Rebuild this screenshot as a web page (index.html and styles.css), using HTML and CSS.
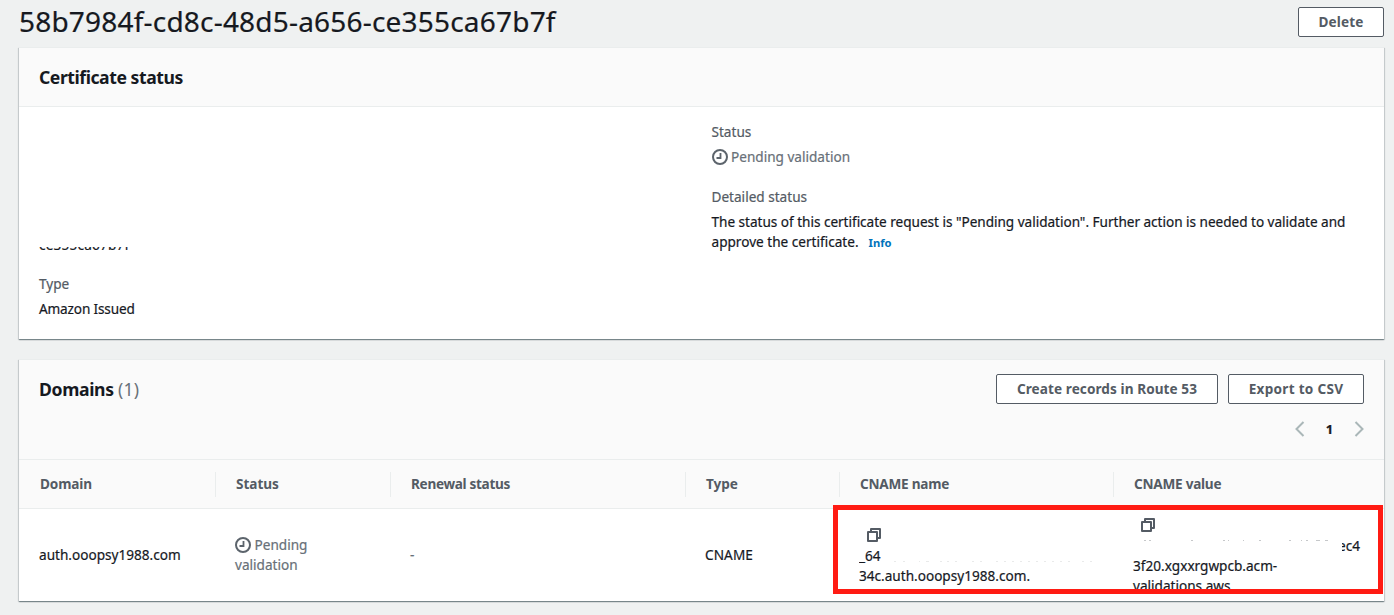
FILE: index.html
```
<!DOCTYPE html>
<html lang="en">
<head>
<meta charset="utf-8">
<title>Certificate status</title>
<link rel="stylesheet" href="styles.css">
</head>
<body>
<svg width="0" height="0" class="defs" aria-hidden="true">
  <symbol id="clock" viewBox="0 0 16 16">
    <circle cx="8" cy="8" r="7" fill="none" stroke="currentColor" stroke-width="2"/>
    <path d="M8.5 4v5H4.5" fill="none" stroke="currentColor" stroke-width="1.8"/>
  </symbol>
  <symbol id="copy" viewBox="0 0 14 14">
    <path d="M1 4h9v9H1zM4 4V1h9v9h-3" fill="none" stroke="currentColor" stroke-width="2" stroke-linejoin="round"/>
  </symbol>
</svg>
<header class="page-head">
  <h1 class="title">58b7984f-cd8c-48d5-a656-ce355ca67b7f</h1>
  <button class="btn delete">Delete</button>
</header>

<section class="card status-card">
  <div class="card-head"><h2 class="heading cert">Certificate status</h2></div>
  <div class="columns">
    <div class="column left">
      <div class="clipped-id"><span>ce355ca67b7f</span></div>
      <dl class="pair">
        <dt>Type</dt>
        <dd class="issued">Amazon Issued</dd>
      </dl>
    </div>
    <div class="column">
      <dl class="pair">
        <dt>Status</dt>
        <dd class="pending"><svg class="clock"><use href="#clock"/></svg>Pending validation</dd>
      </dl>
      <dl class="pair">
        <dt>Detailed status</dt>
        <dd><span class="detail">The status of this certificate request is "Pending validation". Further action is needed to validate and</span><br>approve the certificate.<a class="info">Info</a></dd>
      </dl>
    </div>
  </div>
</section>

<section class="card domains-card">
  <div class="toolbar">
    <h2 class="heading">Domains <span class="count">(1)</span></h2>
    <div class="tools">
      <div class="buttons">
        <button class="btn route">Create records in Route 53</button>
        <button class="btn csv">Export to CSV</button>
      </div>
      <div class="pager">
        <svg class="arrow" viewBox="0 0 10 16"><path d="M8.5 1L1.5 8l7 7"/></svg>
        <span class="page">1</span>
        <svg class="arrow" viewBox="0 0 10 16"><path d="M1.5 1l7 7-7 7"/></svg>
      </div>
    </div>
  </div>
  <div class="row head">
    <div class="th">Domain</div>
    <div class="th">Status</div>
    <div class="th renewal">Renewal status</div>
    <div class="th">Type</div>
    <div class="th cname">CNAME name</div>
    <div class="th cname">CNAME value</div>
  </div>
  <div class="row body">
    <div class="td">auth.ooopsy1988.com</div>
    <div class="td pending"><div><svg class="clock"><use href="#clock"/></svg>Pending<br>validation</div></div>
    <div class="td pending">-</div>
    <div class="td type">CNAME</div>
    <div class="td name">
      <div class="line icon"><svg class="copy"><use href="#copy"/></svg></div>
      <div class="line masked"><span class="prefix">_64</span><svg class="residue" width="215" height="20"><path d="M11 15.5h2m7 0h2m14 0h1m6 0h3m11 0h2m5 0h2m6 0h2m15 0h2m6 0h2m14 0h2m6 0h2m6 0h2m6 0h2m6 0h2m6 0h2m6 0h2m6 0h2m6 0h2m6 0h2m12 0h2m6 0h2"/></svg></div>
      <div class="line">34c.auth.ooopsy1988.com.</div>
    </div>
    <div class="td value">
      <div class="line icon"><svg class="copy"><use href="#copy"/></svg></div>
      <div class="line tail"><svg class="residue tops" width="209" height="20"><path d="M11 4.5h2m3 0h2m40 0h2m30 0h2m3 0h1m14 0h1m15 0h2m28 0h2m10 0h1m4 0h2m8 0h4m5 0h3"/></svg><span class="suffix"><span>ec4</span></span></div>
      <div class="line">3f20.xgxxrgwpcb.acm-</div>
      <div class="line">validations.aws</div>
    </div>
  </div>
  <div class="highlight"></div>
</section>
</body>
</html>
```
FILE: styles.css
```
* { box-sizing: border-box; }
body {
  margin: 0;
  height: 615px;
  overflow: hidden;
  padding: 0 10px 0 19px;
  background: #eff1f1;
  color: #16191f;
  font: 13.6px/20px "Noto Sans", sans-serif;
  -webkit-text-stroke: .2px currentColor;
}
h1, h2, dl, dd { margin: 0; }
.defs { position: absolute; }
.page-head { display: flex; justify-content: space-between; align-items: flex-start; height: 47px; }
.title { font-size: 28px; line-height: 36px; font-weight: 400; letter-spacing: .2px; padding-top: 3px; }
.btn {
  height: 30px;
  padding: 0;
  border: 1px solid #545b64;
  border-radius: 2px;
  background: #fff;
  color: #545b64;
  font: 700 13.6px/28px "Noto Sans", sans-serif;
  letter-spacing: .1px;
}
.btn, .head, .info, .heading { -webkit-text-stroke: 0; }
.delete { width: 86px; margin-top: 7px; }
.route { width: 222px; letter-spacing: .07px; }
.csv { width: 136px; letter-spacing: .27px; }

.card {
  position: relative;
  background: #fff;
  border-top: 1px solid #eaeded;
  box-shadow: 0 1px 1px 0 rgba(0,28,36,.35), 1px 1px 1px 0 rgba(0,28,36,.12), -1px 1px 1px 0 rgba(0,28,36,.12);
}
.status-card { height: 292px; margin-bottom: 20px; }
.domains-card { height: 242px; }
.card-head { height: 59px; padding: 19px 20px; background: #fafafa; border-bottom: 1px solid #eaeded; }
.heading { font-size: 17.6px; line-height: 20px; font-weight: 700; letter-spacing: -.35px; }
.cert { letter-spacing: -.45px; }
.count { font-weight: 400; color: #687078; letter-spacing: .3px; }
.columns { display: grid; grid-template-columns: 672.5px 1fr; padding: 15px 20px 0; }
.left { padding-top: 125px; }
.clipped-id { height: 3px; margin-bottom: 24px; overflow: hidden; letter-spacing: .2px; }
.clipped-id span { display: block; margin-top: -12px; }
.pair { margin-bottom: 20px; }
.pair dt { color: #545b64; margin-bottom: 5px; }
.issued { letter-spacing: -.15px; }
.detail { letter-spacing: -.025px; }
.pending { color: #687078; }
.clock { width: 16px; height: 16px; margin-right: 3.5px; vertical-align: -3px; color: #5c646c; }
.info { margin-left: 10px; font-size: 11.2px; font-weight: 700; color: #0073bb; }

.toolbar { display: flex; justify-content: space-between; height: 100px; padding: 14px 20px 0; background: #fafafa; border-bottom: 1px solid #eaeded; }
.toolbar .heading { padding-top: 5px; }
.buttons { display: flex; gap: 10px; }
.pager { display: flex; justify-content: flex-end; align-items: center; margin-top: 15px; height: 20px; }
.arrow { width: 10px; height: 16px; fill: none; stroke: #aab7b8; stroke-width: 2; }
.page { width: 49px; text-align: center; font-weight: 700; font-size: 13px; }

.row { display: grid; grid-template-columns: 197px 175px 295px 154px 274px 1fr; align-items: center; }
.head { height: 49px; background: #fafafa; border-bottom: 1px solid #eaeded; color: #545b64; font-weight: 700; }
.th { height: 25px; line-height: 23px; padding-left: 20px; border-right: 1px solid #eaeded; letter-spacing: -.05px; }
.th:first-child { padding-left: 21px; letter-spacing: -.15px; }
.th:last-child { border-right: 0; }
.th.renewal { letter-spacing: -.32px; }
.th.cname { letter-spacing: -.25px; }
.body { height: 92px; }
.td { padding-left: 19px; }
.td:first-child { padding-left: 20px; }
.type { letter-spacing: .1px; }
.name, .value { padding-top: 2px; }
.line { height: 20px; white-space: nowrap; }
.icon { padding: 2px 0 0 8px; color: #545b64; }
.copy { display: block; width: 14px; height: 14px; }
.masked, .tail { display: flex; }
.prefix { width: 22px; overflow: hidden; }
.residue { margin-left: 2px; fill: none; stroke: #e9eaea; }
.tops { margin-left: 0; stroke: #c6c8ca; }
.suffix { width: 20px; height: 20px; overflow: hidden; }
.suffix span { display: block; margin-left: -4px; }
.highlight { position: absolute; left: 814px; top: 145px; width: 550px; height: 89px; border: 5px solid #ff1b13; }
```
